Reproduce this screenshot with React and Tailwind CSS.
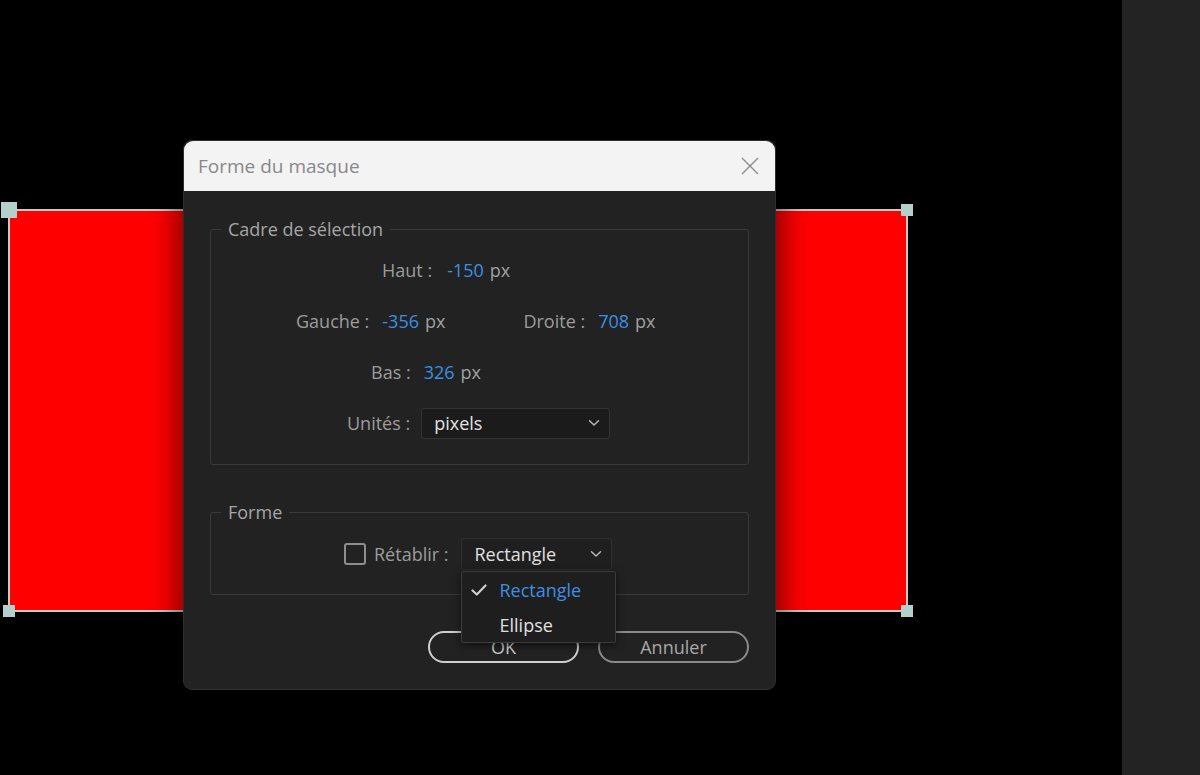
import React from "react";

const font = { fontFamily: '"Open Sans", "Noto Sans", sans-serif' };

function Chevron() {
  return (
    <svg width="12" height="8" viewBox="0 0 12 8" fill="none">
      <path d="M1.5 1.8 L6 6 L10.5 1.8" stroke="#b8b8b8" strokeWidth="1.5" strokeLinecap="round" strokeLinejoin="round" />
    </svg>
  );
}

function Handle({ className }) {
  return <div className={"absolute w-[12px] h-[12px] bg-[#b3d0cc] " + className} />;
}

function Row({ label, value, className = "", gap = "ml-[13px]" }) {
  return (
    <div className={"flex items-center " + className}>
      <span className="text-[#9c9c9c]">{label}</span>
      <span className={gap + " text-[#3d8fe3]"}>{value}</span>
      <span className="ml-[6px] text-[#a0a0a0]">px</span>
    </div>
  );
}

export default function App() {
  return (
    <div className="w-[1200px] h-[775px] flex bg-black overflow-hidden" style={font}>
      <div className="relative flex-1 bg-black">
        {/* red layer with mask box */}
        <div className="absolute left-[8px] top-[209px] w-[900px] h-[403px] bg-[#ff0000] border-2 border-[#c4cbcb]">
          <Handle className="-left-[9px] -top-[9px] w-[16px] h-[16px]" />
          <Handle className="-right-[7px] -top-[7px]" />
          <Handle className="-left-[7px] -bottom-[7px]" />
          <Handle className="-right-[7px] -bottom-[7px]" />
        </div>

        {/* dialog */}
        <div className="absolute left-[183px] top-[140px] w-[593px] rounded-[9px] bg-[#222222] shadow-[0_0_26px_8px_rgba(0,0,0,0.45)] border border-[#2e2e2e]">
          <div className="h-[50px] flex items-center justify-between pl-[14px] pr-[15px] bg-[#f3f3f3] rounded-t-[9px]">
            <span className="text-[19px] text-[#888888]">Forme du masque</span>
            <svg width="20" height="20" viewBox="0 0 20 20" fill="none">
              <path d="M2 2 L18 18 M18 2 L2 18" stroke="#8c8c8c" strokeWidth="1.4" />
            </svg>
          </div>

          <div className="px-[26px] pt-[26px] pb-[26px] text-[18px] leading-[24px]">
            <fieldset className="border border-[#3a3a3a] rounded-[3px] px-[10px] pt-[13px] pb-[25px]">
              <legend className="px-[7px] text-[#a6a6a6]">Cadre de sélection</legend>
              <div className="flex flex-col gap-[19px]">
                <Row label="Haut :" value="-150" gap="ml-[15px]" className="h-[32px] ml-[161px]" />
                <div className="h-[32px] flex items-center ml-[75px]">
                  <Row label="Gauche :" value="-356" />
                  <Row label="Droite :" value="708" className="ml-[78px]" />
                </div>
                <Row label="Bas :" value="326" className="h-[32px] ml-[150px]" />
                <div className="h-[32px] flex items-center ml-[126px]">
                  <span className="text-[#9c9c9c]">Unités :</span>
                  <div className="ml-[11px] w-[189px] h-[31px] flex items-center justify-between pl-[12px] pr-[9px] bg-[#1b1b1b] border border-[#333333] rounded-[3px]">
                    <span className="text-[#e2e2e2]">pixels</span>
                    <Chevron />
                  </div>
                </div>
              </div>
            </fieldset>

            <fieldset className="mt-[35px] border border-[#3a3a3a] rounded-[3px] px-[10px] pt-[14px] pb-[24px]">
              <legend className="px-[7px] text-[#a6a6a6]">Forme</legend>
              <div className="h-[32px] flex items-center ml-[123px]">
                <div className="w-[22px] h-[22px] border-2 border-[#8e8e8e] rounded-[3px]" />
                <span className="ml-[8px] text-[#9c9c9c]">Rétablir :</span>
                <div className="relative ml-[12px]">
                  <div className="w-[151px] h-[32px] flex items-center justify-between pl-[13px] pr-[9px] bg-[#1f1f1f] border border-[#2f2f2f] rounded-[3px]">
                    <span className="text-[#e0e0e0]">Rectangle</span>
                    <Chevron />
                  </div>
                  <div className="absolute left-0 top-[33px] w-[155px] h-[72px] z-10 bg-[#1e1e1e] border border-[#3c3c3c] rounded-[2px] shadow-[0_2px_8px_rgba(0,0,0,0.6)] flex flex-col">
                    <div className="h-[36px] flex items-center pl-[9px]">
                      <svg width="16" height="14" viewBox="0 0 16 14" fill="none">
                        <path d="M1.5 7.5 L5.8 11.5 L14.5 2.5" stroke="#cfcfcf" strokeWidth="2.2" strokeLinecap="round" strokeLinejoin="round" />
                      </svg>
                      <span className="ml-[13px] text-[#3d8fe3]">Rectangle</span>
                    </div>
                    <div className="h-[36px] flex items-center pl-[38px]">
                      <span className="text-[#e0e0e0]">Ellipse</span>
                    </div>
                  </div>
                </div>
              </div>
            </fieldset>

            <div className="mt-[36px] flex justify-end gap-[19px]">
              <div className="w-[151px] h-[32px] flex items-center justify-center rounded-full border-2 border-[#cfcfcf] text-[#cccccc]">OK</div>
              <div className="w-[151px] h-[32px] flex items-center justify-center rounded-full border-2 border-[#8a8a8a] text-[#a8a8a8]">Annuler</div>
            </div>
          </div>
        </div>
      </div>
      <div className="w-[78px] bg-[#232323]" />
    </div>
  );
}
